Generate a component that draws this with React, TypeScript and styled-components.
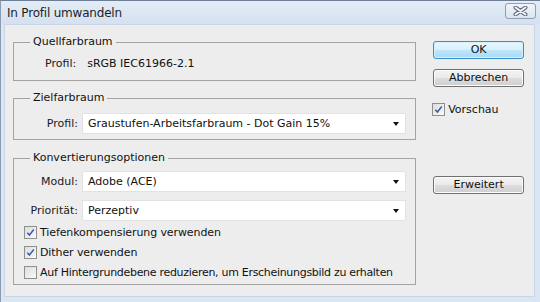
import * as React from 'react'
import styled, { createGlobalStyle } from 'styled-components'

const GlobalStyle = createGlobalStyle`
    html, body {
        margin: 0;
        padding: 0;
        background: #dce7f4;
    }
    * {
        box-sizing: border-box;
    }
`

const uiFont = `'DejaVu Sans', 'Liberation Sans', sans-serif`

const Window = styled.div`
    width: 540px;
    height: 302px;
    display: flex;
    flex-direction: column;
    background: #dae6f4;
    border-top: 1px solid #6d7d93;
    border-left: 1px solid #8c9bb0;
    font-family: ${uiFont};
    font-size: 11px;
    color: #111;
    white-space: nowrap;
`

const TitleBar = styled.div`
    height: 23px;
    flex-shrink: 0;
    display: flex;
    align-items: center;
    justify-content: space-between;
    padding: 0 4px 0 6px;
    background: linear-gradient(#e3ecf7, #d4e1f0);
`

const Title = styled.span`
    font-size: 12px;
    color: #1e1e1e;
    letter-spacing: -0.2px;
`

const CloseButton = styled.div`
    width: 31px;
    height: 16px;
    margin-top: -4px;
    border: 1px solid #8e9db4;
    border-radius: 3px;
    background: linear-gradient(#f1f5fa, #dbe4ee);
    display: flex;
    align-items: center;
    justify-content: center;
`

const Client = styled.div`
    flex: 1;
    margin: 0 5px 5px 3px;
    background: #ededed;
    border: 1px solid #c9d5e4;
    display: flex;
    padding: 10px 10px 0 8px;
`

const LeftColumn = styled.div`
    width: 404px;
    display: flex;
    flex-direction: column;
`

const RightColumn = styled.div`
    margin-left: 17px;
    width: 91px;
    display: flex;
    flex-direction: column;
    padding-top: 6px;
`

const Group = styled.fieldset<{
    $padTop: number
    $padBottom: number
    $gapBefore?: number
}>`
    margin: ${p => p.$gapBefore || 0}px 0 0 0;
    min-inline-size: 0;
    border: 1px solid #a3a3a3;
    padding: ${p => p.$padTop}px 9px ${p => p.$padBottom}px 0;
`

const Legend = styled.legend`
    margin-left: 16px;
    padding: 0 3px;
    line-height: 14px;
    font-size: 11px;
`

const InfoRow = styled.div`
    display: flex;
    gap: 11px;
    padding-left: 31px;
    line-height: 14px;
`

const FieldRow = styled.div<{ $gapAfter?: number }>`
    display: grid;
    grid-template-columns: 64px 1fr;
    column-gap: 4px;
    align-items: center;
    margin-bottom: ${p => p.$gapAfter || 0}px;
`

const FieldLabel = styled.span`
    text-align: right;
    color: #1a1a1a;
`

const Select = styled.div`
    height: 21px;
    background: #fff;
    border: 1px solid #e2e2e2;
    display: flex;
    align-items: center;
    justify-content: space-between;
    padding: 0 6px 0 5px;
`

const Arrow = styled.span`
    width: 0;
    height: 0;
    border-left: 3.5px solid transparent;
    border-right: 3.5px solid transparent;
    border-top: 4px solid #111;
`

const CheckList = styled.div`
    margin-top: 1px;
    padding-left: 10px;
`

const CheckRow = styled.label<{ $tight?: boolean }>`
    display: flex;
    align-items: center;
    gap: 3px;
    height: 20px;
    letter-spacing: ${p => (p.$tight ? '-0.3px' : '-0.1px')};
`

const Box = styled.span`
    width: 13px;
    height: 13px;
    flex-shrink: 0;
    border: 1px solid #8e8f8f;
    background: linear-gradient(135deg, #dcdcdc, #fafafa);
    display: flex;
    align-items: center;
    justify-content: center;
`

const Button = styled.div<{ $default?: boolean; $top: number }>`
    height: 18px;
    margin-top: ${p => p.$top}px;
    border: 1px solid ${p => (p.$default ? '#3c8ec8' : '#707070')};
    border-radius: 3px;
    background: ${p =>
        p.$default
            ? 'linear-gradient(#eaf6fd 0%, #d9f0fc 50%, #bee6fd 51%, #a7d9f5 100%)'
            : 'linear-gradient(#f2f2f2 0%, #ebebeb 50%, #dddddd 51%, #cfcfcf 100%)'};
    box-shadow: inset 0 0 0 1px ${p => (p.$default ? '#d4f1fd' : '#fcfcfc')};
    display: flex;
    align-items: center;
    justify-content: center;
    font-size: 11px;
    line-height: 14px;
`

const SideCheck = styled.div`
    margin-top: 16px;
    display: flex;
    align-items: center;
    gap: 3px;
    height: 13px;
    margin-left: -1px;
`

const CheckBox = ({ checked }: { checked: boolean }) => (
    <Box>
        {checked && (
            <svg width="9" height="9" viewBox="0 0 9 9">
                <path
                    d="M1.3 4.7 L3.4 7 L7.8 1.5"
                    fill="none"
                    stroke="#3d5aa8"
                    strokeWidth="1.5"
                />
            </svg>
        )}
    </Box>
)

const App = () => (
    <>
        <GlobalStyle />
        <Window>
            <TitleBar>
                <Title>In Profil umwandeln</Title>
                <CloseButton>
                    <svg width="15" height="10" viewBox="0 0 15 10">
                        <path
                            d="M2.5 1.5 L12.5 8.5 M12.5 1.5 L2.5 8.5"
                            stroke="#5d6a7e"
                            strokeWidth="4"
                            strokeLinecap="round"
                        />
                        <path
                            d="M2.5 1.5 L12.5 8.5 M12.5 1.5 L2.5 8.5"
                            stroke="#f4f6f9"
                            strokeWidth="2"
                            strokeLinecap="round"
                        />
                    </svg>
                </CloseButton>
            </TitleBar>
            <Client>
                <LeftColumn>
                    <Group $padTop={8} $padBottom={9}>
                        <Legend>Quellfarbraum</Legend>
                        <InfoRow>
                            <FieldLabel>Profil:</FieldLabel>
                            <span>sRGB IEC61966-2.1</span>
                        </InfoRow>
                    </Group>
                    <Group $padTop={8} $padBottom={5} $gapBefore={10}>
                        <Legend>Zielfarbraum</Legend>
                        <FieldRow>
                            <FieldLabel>Profil:</FieldLabel>
                            <Select>
                                Graustufen-Arbeitsfarbraum - Dot Gain 15%
                                <Arrow />
                            </Select>
                        </FieldRow>
                    </Group>
                    <Group $padTop={6} $padBottom={2} $gapBefore={11}>
                        <Legend>Konvertierungsoptionen</Legend>
                        <FieldRow $gapAfter={8}>
                            <FieldLabel>Modul:</FieldLabel>
                            <Select>
                                Adobe (ACE)
                                <Arrow />
                            </Select>
                        </FieldRow>
                        <FieldRow>
                            <FieldLabel>Priorität:</FieldLabel>
                            <Select>
                                Perzeptiv
                                <Arrow />
                            </Select>
                        </FieldRow>
                        <CheckList>
                            <CheckRow>
                                <CheckBox checked />
                                Tiefenkompensierung verwenden
                            </CheckRow>
                            <CheckRow>
                                <CheckBox checked />
                                Dither verwenden
                            </CheckRow>
                            <CheckRow $tight>
                                <CheckBox checked={false} />
                                Auf Hintergrundebene reduzieren, um
                                Erscheinungsbild zu erhalten
                            </CheckRow>
                        </CheckList>
                    </Group>
                </LeftColumn>
                <RightColumn>
                    <Button $default $top={0}>
                        OK
                    </Button>
                    <Button $top={10}>Abbrechen</Button>
                    <SideCheck>
                        <CheckBox checked />
                        Vorschau
                    </SideCheck>
                    <Button $top={60}>Erweitert</Button>
                </RightColumn>
            </Client>
        </Window>
    </>
)

export default App
